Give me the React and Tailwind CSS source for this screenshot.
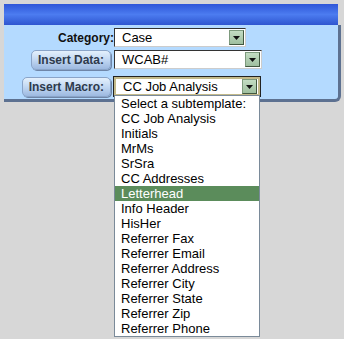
import React from 'react'

const items = [
  'Select a subtemplate:',
  'CC Job Analysis',
  'Initials',
  'MrMs',
  'SrSra',
  'CC Addresses',
  'Letterhead',
  'Info Header',
  'HisHer',
  'Referrer Fax',
  'Referrer Email',
  'Referrer Address',
  'Referrer City',
  'Referrer State',
  'Referrer Zip',
  'Referrer Phone',
]

function Arrow() {
  return (
    <span className="flex w-[15px] h-[15px] items-center justify-center bg-gradient-to-b from-[#c3dcc3] to-[#9fbf9f] border border-[#7d9a7d] border-r-[#42573f] border-b-[#42573f]">
      <svg width="7" height="4" viewBox="0 0 7 4">
        <path d="M0 0h7L3.5 4z" fill="#111" />
      </svg>
    </span>
  )
}

function Select({ value, width, focused }) {
  return (
    <div
      className={
        'flex items-center justify-between bg-white pl-[7px] pr-[1px] h-[19px] text-[13px] text-black ' +
        (focused ? 'border-2 border-[#c2b98a] outline outline-1 outline-[#222]' : 'border border-[#333] border-r-[#ccc] border-b-[#ccc]')
      }
      style={{ width }}
    >
      <span className="leading-none">{value}</span>
      <Arrow />
    </div>
  )
}

function Button({ children }) {
  return (
    <div className="h-[20px] px-[6px] flex items-center rounded-[5px] bg-gradient-to-b from-[#e4f0fc] via-[#c1d7f2] to-[#9db9e0] border border-[#8aa4c8] shadow-[1px_1px_0_#6f86a8] text-[12px] font-bold text-[#2e3a4c]">
      {children}
    </div>
  )
}

export default function App() {
  return (
    <div className="relative w-[344px] h-[339px] bg-[#d7d7d7] font-['Liberation_Sans',Arial,sans-serif] overflow-hidden">
      <div className="pt-[4px] pl-[4px]">
        <div className="w-[337px]">
          <div className="h-[21px] bg-gradient-to-b from-[#2f56d8] via-[#4c7cf0] to-[#2f55d0] mr-[3px]" />
          <div className="bg-[#b4daff] border-r-[3px] border-b-[3px] border-[#5d7191] rounded-br-[6px] h-[77px] pt-[3px]">
            <div className="flex items-center h-[19px]">
              <div className="w-[110px] text-right text-[12px] font-bold text-[#111]">Category:</div>
              <Select value="Case" width={132} />
            </div>
            <div className="flex items-center h-[19px] mt-[3px]">
              <div className="w-[110px] flex justify-end pr-[3px]">
                <Button>Insert Data:</Button>
              </div>
              <Select value="WCAB#" width={148} />
            </div>
            <div className="flex items-center h-[21px] mt-[7px]">
              <div className="w-[110px] flex justify-end pr-[3px]">
                <Button>Insert Macro:</Button>
              </div>
              <Select value="CC Job Analysis" width={146} focused />
            </div>
          </div>
        </div>
      </div>
      <div className="absolute left-[114px] top-[95px] w-[146px] bg-white border border-[#7a8a99] text-[13px] text-black">
        {items.map((t) => (
          <div
            key={t}
            className={'h-[15px] leading-[15px] pl-[6px] ' + (t === 'Letterhead' ? 'bg-[#5b8c5b] text-white' : '')}
          >
            {t}
          </div>
        ))}
      </div>
    </div>
  )
}
